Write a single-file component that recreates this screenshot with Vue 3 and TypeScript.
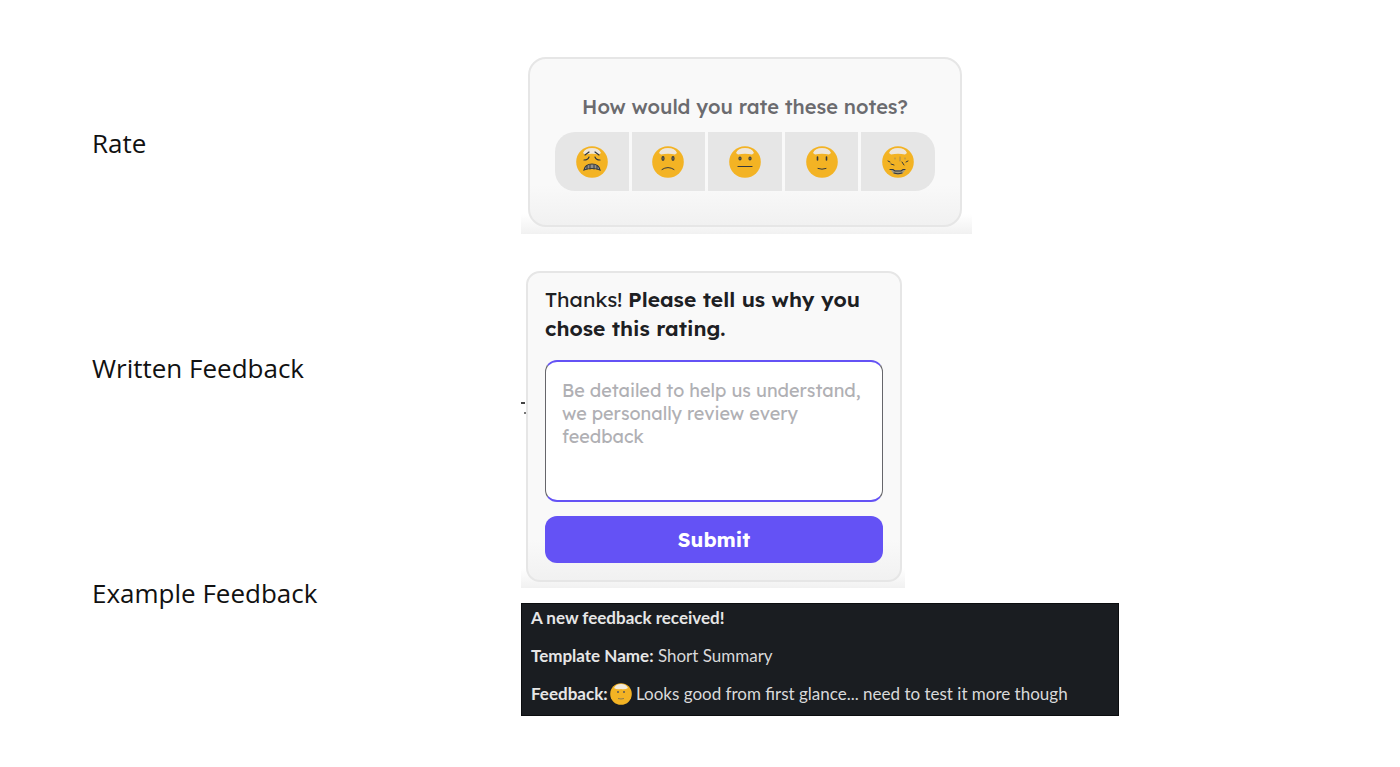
<script setup lang="ts">
import { ref } from 'vue'

type Mood = 'awful' | 'sad' | 'neutral' | 'good' | 'great'

const steps: string[] = ['Rate', 'Written Feedback', 'Example Feedback']
const moods: Mood[] = ['awful', 'sad', 'neutral', 'good', 'great']
const selected = ref<Mood | null>(null)
const feedback = ref('')
</script>

<template>
  <main class="page">
    <div class="steps">
      <h2 v-for="step in steps" :key="step" class="step">{{ step }}</h2>
    </div>

    <div class="examples">
      <section class="frame rate-frame">
        <div class="card rate-card">
          <p class="question">How would you rate these notes?</p>
          <div class="moods">
            <button
              v-for="mood in moods"
              :key="mood"
              type="button"
              class="mood"
              :aria-label="mood"
              :aria-pressed="selected === mood"
              @click="selected = mood"
            >
              <svg class="face" viewBox="0 0 32 32" aria-hidden="true">
                <circle cx="16" cy="16" r="15.8" fill="#f3b324" />
                <path d="M7 7Q9 2 16 2T25 7L23 8.500Q16 7 9 8.500Z" fill="#eee6da" />
                <g fill="none" stroke="#33383d" stroke-width="1.2" stroke-linecap="round">
                  <template v-if="mood === 'awful'">
                    <path d="M9 9l4-3M19 6l4 3M8 14q4 0 5-3M24 14q-4 0-5-3" />
                    <path d="M8 24q1-6 8-6t8 6q-8-3-16 0Z" fill="#92908c" />
                    <path d="M11 20v3M14 19v4M18 19v4M21 20v3" stroke-width="1" />
                  </template>
                  <template v-else-if="mood === 'sad'">
                    <ellipse cx="11" cy="12.500" rx="1" ry="1.800" fill="#b09565" />
                    <ellipse cx="21" cy="12.500" rx="1" ry="1.800" fill="#b09565" />
                    <path d="M10 23.500q6-4 12 0" stroke-width="1" />
                  </template>
                  <template v-else-if="mood === 'neutral'">
                    <ellipse cx="11" cy="12.500" rx="1" ry="1.500" fill="#b09565" />
                    <ellipse cx="21" cy="12.500" rx="1" ry="1.500" fill="#b09565" />
                    <path d="M9 20.500h14" />
                  </template>
                  <template v-else-if="mood === 'good'">
                    <path d="M11.500 11v3M20.500 11v3" stroke-width="1.600" />
                    <path d="M12 22.500q4 1.500 8 0" stroke-width="1" />
                  </template>
                  <template v-else>
                    <path d="M6 15l2 1M9 18l3 1M20 16l2 3M24 16l2-1" stroke-width="1" />
                    <path d="M13 12v1M18 11v4M23 12v1" stroke="#a08858" stroke-width="1" />
                    <path d="M9 24h14q-2 4.500-7 4.500T9 24Z" fill="#a09880" stroke="none" />
                    <path d="M8 23.500h3l2 1.500h6l2-1.500h2M12 27q4 1.500 8 0" />
                  </template>
                </g>
              </svg>
            </button>
          </div>
        </div>
      </section>

      <section class="frame written-frame">
        <form class="card written-card" @submit.prevent>
          <label class="thanks" for="feedback">
            <span>Thanks! </span><strong>Please tell us why you </strong><strong>chose this rating.</strong>
          </label>
          <textarea
            id="feedback"
            v-model="feedback"
            class="feedback"
            placeholder="Be detailed to help us understand, we personally review every feedback"
          ></textarea>
          <button type="submit" class="submit">Submit</button>
        </form>
      </section>

      <section class="message">
        <p><b>A new feedback received!</b></p>
        <p><b>Template Name:</b> Short Summary</p>
        <p>
          <b>Feedback:</b>
          <svg class="mini-face" viewBox="0 0 22 22" aria-hidden="true">
            <circle cx="11" cy="11" r="10.800" fill="#f3b324" />
            <path d="M4 5Q6 1 11 1T18 5Q15 7 11 6Q7 7 4 5Z" fill="#f2eadb" />
            <path d="M8 8v2M14 8v2" stroke="#5c5a55" stroke-width="1.500" />
            <path d="M8 15.500q3 1 6 0" fill="none" stroke="#8a7a50" />
          </svg>
          Looks good from first glance... need to test it more though
        </p>
      </section>
    </div>
  </main>
</template>

<style>
body {
  margin: 0;
  background: #fff;
}
</style>

<style scoped>
.page {
  display: grid;
  grid-template-columns: 429px minmax(0, 598px);
  padding: 30px 32px 48px 92px;
  color: #111;
  font-family: Lexend, Inter, sans-serif;
}

.steps {
  display: grid;
  grid-auto-rows: 225px;
  align-content: start;
}

.step {
  margin: 0;
  align-self: center;
  font: 400 26px/36px "Open Sans", "Noto Sans", sans-serif;
}

.examples {
  display: flex;
  flex-direction: column;
  align-items: flex-start;
  padding-top: 27px;
}

.frame {
  position: relative;
  box-sizing: border-box;
  max-width: 100%;
  background: linear-gradient(to top, #f1f1f1, #fff 20px);
}

.rate-frame {
  width: 451px;
  padding: 0 10px 7px 7px;
  margin-bottom: 37px;
}

.written-frame {
  width: 384px;
  padding: 0 3px 6px 5px;
  margin-bottom: 15px;
}

/* Edge of a neighbouring element peeking out beside the card */
.written-frame::before,
.written-frame::after {
  content: "";
  position: absolute;
  left: 0;
  top: 131px;
  width: 4px;
  height: 2px;
  background: #444;
}

.written-frame::after {
  left: 3px;
  top: 141px;
  width: 2px;
  background: #777;
}

.card {
  box-sizing: border-box;
  border: 2px solid #e6e6e6;
  background: linear-gradient(to top, #f1f1f1, #f9f9f9 40px);
}

.rate-card {
  padding: 34px 25px;
  border-radius: 18px;
}

.question {
  margin: 0 0 11px;
  color: #6b6b6f;
  font-size: 20px;
  font-weight: 500;
  line-height: 28px;
  text-align: center;
  white-space: nowrap;
}

.moods {
  display: grid;
  grid-template-columns: repeat(5, 1fr);
  gap: 3px;
  overflow: hidden;
  border-radius: 20px;
}

.mood {
  display: grid;
  place-items: center;
  height: 59px;
  padding: 0;
  border: 0;
  background: #e6e6e6;
  cursor: pointer;
}

.face {
  width: 32px;
  height: 32px;
}

.written-card {
  display: flex;
  flex-direction: column;
  padding: 12px 17px 17px;
  border-radius: 14px;
}

.thanks {
  color: #1d2023;
  font-size: 21px;
  line-height: 29px;
}

.thanks strong {
  font-weight: 600;
}

.feedback {
  box-sizing: border-box;
  height: 142px;
  margin: 17px 0 14px;
  padding: 17px 16px;
  border: solid #6452f5;
  border-width: 2px 1px;
  border-right-color: #66666b;
  border-left-color: #66666b;
  border-radius: 12px;
  background: #fff;
  color: #1d2023;
  font: 400 18px/23px Lexend, Inter, sans-serif;
  resize: none;
  outline: none;
}

.feedback::placeholder {
  color: #b0b0b4;
  opacity: 1;
}

.submit {
  height: 47px;
  border: 0;
  border-radius: 12px;
  background: #6452f5;
  color: #fff;
  font: 700 20px/28px Lexend, Inter, sans-serif;
  cursor: pointer;
}

.message {
  box-sizing: border-box;
  display: flex;
  flex-direction: column;
  gap: 14px;
  width: 100%;
  padding: 2px 9px 9px;
  border: 1px solid #0b0d0f;
  background: #1a1d21;
  color: #d9d9da;
  font: 400 17px/24px Lato, sans-serif;
}

.message p {
  margin: 0;
}

.message b {
  color: #e6e6e6;
}

.mini-face {
  width: 22px;
  height: 22px;
  margin-left: 2px;
  vertical-align: -5px;
}
</style>
